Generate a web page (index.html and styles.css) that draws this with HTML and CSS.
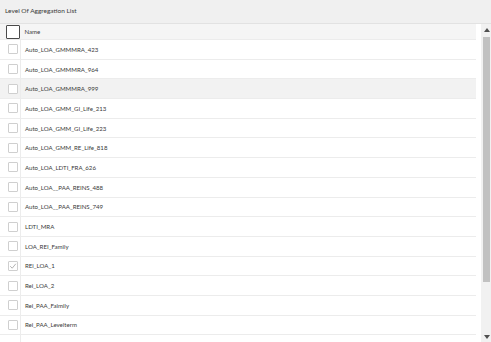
FILE: index.html
```html
<!DOCTYPE html>
<html lang="en">
<head>
    <meta charset="UTF-8">
    <title>Level Of Aggregation List</title>
    <link rel="stylesheet" href="styles.css">
</head>
<body>
    <div class="panel">
        <div class="panel-title">Level Of Aggregation List</div>
        <div class="list-body">
            <div class="list-wrap">
                <table class="loa-table">
                    <thead>
                        <tr>
                            <th class="col-check"><span class="head-box"></span></th>
                            <th>Name</th>
                        </tr>
                    </thead>
                    <tbody>
                        <tr><td class="col-check"><span class="box"></span></td><td>Auto_LOA_GMMMRA_423</td></tr>
                        <tr><td class="col-check"><span class="box"></span></td><td>Auto_LOA_GMMMRA_964</td></tr>
                        <tr class="hover"><td class="col-check"><span class="box"></span></td><td>Auto_LOA_GMMMRA_999</td></tr>
                        <tr><td class="col-check"><span class="box"></span></td><td>Auto_LOA_GMM_GI_Life_213</td></tr>
                        <tr><td class="col-check"><span class="box"></span></td><td>Auto_LOA_GMM_GI_Life_223</td></tr>
                        <tr><td class="col-check"><span class="box"></span></td><td>Auto_LOA_GMM_RE_Life_818</td></tr>
                        <tr><td class="col-check"><span class="box"></span></td><td>Auto_LOA_LDTI_FRA_626</td></tr>
                        <tr><td class="col-check"><span class="box"></span></td><td>Auto_LOA__PAA_REINS_488</td></tr>
                        <tr><td class="col-check"><span class="box"></span></td><td>Auto_LOA__PAA_REINS_749</td></tr>
                        <tr><td class="col-check"><span class="box"></span></td><td>LDTI_MRA</td></tr>
                        <tr><td class="col-check"><span class="box"></span></td><td>LOA_REI_Family</td></tr>
                        <tr><td class="col-check"><span class="box checked">
                            <svg width="8" height="8" viewBox="0 0 8 8"><path d="M1.2 4.2 L3.2 6.2 L6.8 1.8" fill="none" stroke="#b5b5b5" stroke-width="1"/></svg>
                        </span></td><td>REi_LOA_1</td></tr>
                        <tr><td class="col-check"><span class="box"></span></td><td>Rei_LOA_2</td></tr>
                        <tr><td class="col-check"><span class="box"></span></td><td>Rei_PAA_Faimily</td></tr>
                        <tr><td class="col-check"><span class="box"></span></td><td>Rei_PAA_Levelterm</td></tr>
                        <tr class="cut"><td class="col-check"></td><td></td></tr>
                    </tbody>
                </table>
            </div>
            <div class="scrollbar">
                <div class="arrow">
                    <svg width="6" height="4" viewBox="0 0 6 4"><path d="M0 4 L3 0 L6 4 Z" fill="#505050"/></svg>
                </div>
                <div class="track">
                    <div class="thumb"></div>
                </div>
                <div class="arrow">
                    <svg width="6" height="4" viewBox="0 0 6 4"><path d="M0 0 L6 0 L3 4 Z" fill="#505050"/></svg>
                </div>
            </div>
        </div>
    </div>
</body>
</html>
```

FILE: styles.css
```css
html, body {
    margin: 0;
    padding: 0;
    background-color: #ffffff;
}
body {
    font-family: Lato, "Open Sans", sans-serif;
    color: #3a3a3a;
}
.panel {
    width: 491px;
    height: 342px;
    display: flex;
    flex-direction: column;
    overflow: hidden;
}
.panel-title {
    flex: none;
    height: 24px;
    line-height: 21px;
    padding-left: 5px;
    font-size: 6.5px;
    background-color: #f0f0f0;
    border-bottom: 1px solid #e2e2e2;
    box-sizing: border-box;
}
.list-body {
    flex: 1;
    display: flex;
    min-height: 0;
}
.list-wrap {
    flex: 1;
    overflow: hidden;
    padding-right: 5px;
}
.scrollbar {
    flex: none;
    width: 10px;
    display: flex;
    flex-direction: column;
    background-color: #f1f1f1;
}
.arrow {
    height: 11px;
    display: flex;
    align-items: center;
    justify-content: center;
    padding-left: 1px;
}
.arrow svg {
    display: block;
}
.track {
    flex: 1;
    padding: 2px 1px 0 2px;
}
.thumb {
    height: 245px;
    background-color: #c1c1c1;
}
.loa-table {
    width: 476px;
    border-collapse: collapse;
    font-size: 6.1px;
}
.loa-table th {
    height: 15px;
    padding: 0 0 0 4px;
    text-align: left;
    font-weight: normal;
    background-color: #f5f5f5;
    border-bottom: 1px solid #ececec;
}
.loa-table td {
    height: 18.7px;
    padding: 0 0 0 4px;
    border-bottom: 1px solid #ececec;
    border-left: 1px solid #ececec;
}
.loa-table td.col-check,
.loa-table th.col-check {
    width: 16px;
    padding: 0 0 0 4px;
    border-left: none;
}
.loa-table tr.hover td {
    background-color: #f2f2f2;
}
.head-box {
    display: block;
    width: 12px;
    height: 12px;
    margin-left: 2px;
    border: 1px solid #4a4a4a;
    border-radius: 1px;
    background-color: #ffffff;
}
.box {
    display: block;
    width: 8px;
    height: 8px;
    margin-left: 4px;
    border: 1px solid #cfcfcf;
    border-radius: 1px;
    background-color: #ffffff;
}
.box svg {
    display: block;
}
```
